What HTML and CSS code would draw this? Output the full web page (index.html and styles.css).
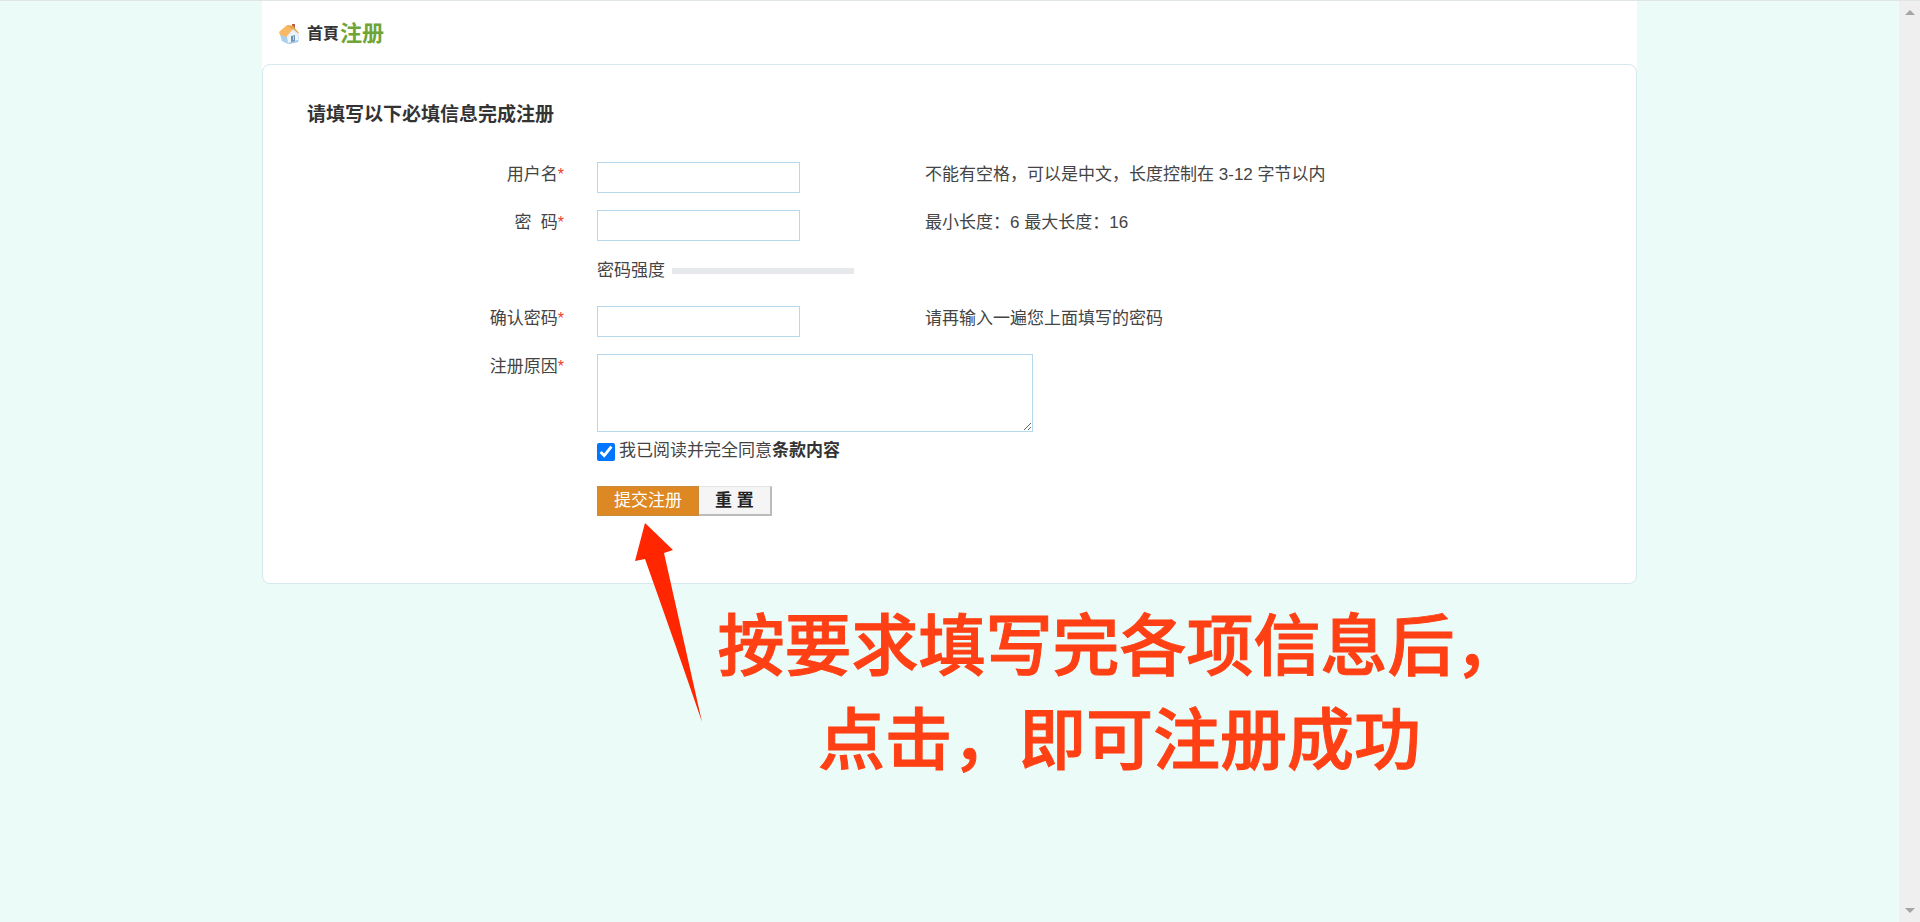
FILE: index.html
```html
<!DOCTYPE html>
<html lang="zh-CN">
<head>
    <meta charset="UTF-8">
    <meta name="viewport" content="width=device-width, initial-scale=1.0">
    <title>注册</title>
    <link rel="stylesheet" href="styles.css">
</head>
<body>
    <div class="page">
        <div class="container">
            <!-- Breadcrumb -->
            <div class="nav">
                <svg class="home-icon" width="22" height="22" viewBox="0 0 22 22" aria-hidden="true">
                    <path d="M1 11 L8 14 L14 7 L20 12 V18 L10 21 L3 18 Z" fill="#d3e7f6"/>
                    <path d="M8 14 L14 6 L19 12 V17 L9 20 Z" fill="#eef5fb"/>
                    <path d="M1 11 L8 14 L9 21 L3 18 Z" fill="#a8d0ee"/>
                    <path d="M9 20 L19 17 V19 L10 21 Z" fill="#9fc6e6"/>
                    <path d="M13 1 H16 V6 L13 5 Z" fill="#b8604a"/>
                    <path d="M0 9 L8 2 L14 3 L15 6 L8 14 L1 12 Z" fill="#f7b963"/>
                    <path d="M8 2 L14 3 L20 10 L18 11 L14 7 Z" fill="#e8a552"/>
                    <path d="M14 6 L21 12 L19 13 L14 8 L9 15 L8 13 Z" fill="#e6eef5"/>
                    <path d="M12 13 L16 12 V18 L12 19 Z" fill="#6f93b3"/>
                    <path d="M14 13 L15 13 V17 L14 17 Z" fill="#b9d4ea"/>
                </svg>
                <a class="nav-home" href="#">首頁</a>
                <span class="nav-current">注册</span>
            </div>

            <!-- Register form -->
            <form class="card">
                <h1 class="card-title">请填写以下必填信息完成注册</h1>

                <div class="row">
                    <label class="label" for="username">用户名<span class="required">*</span></label>
                    <input class="text" type="text" id="username">
                    <p class="hint">不能有空格，可以是中文，长度控制在 3-12 字节以内</p>
                </div>
                <div class="row">
                    <label class="label" for="password">密&nbsp; 码<span class="required">*</span></label>
                    <input class="text" type="password" id="password">
                    <p class="hint">最小长度：6 最大长度：16</p>
                </div>
                <div class="row">
                    <div class="strength">
                        <span>密码强度</span>
                        <div class="strength-bar"></div>
                    </div>
                </div>
                <div class="row">
                    <label class="label" for="confirm">确认密码<span class="required">*</span></label>
                    <input class="text" type="password" id="confirm">
                    <p class="hint">请再输入一遍您上面填写的密码</p>
                </div>
                <div class="row row-reason">
                    <label class="label" for="reason">注册原因<span class="required">*</span></label>
                    <textarea class="reason" id="reason"></textarea>
                </div>
                <div class="row">
                    <div class="agree">
                        <input class="check" type="checkbox" id="agree" checked>
                        <label for="agree">我已阅读并完全同意</label><a class="terms" href="#">条款内容</a>
                    </div>
                </div>
                <div class="row row-buttons">
                    <div class="buttons">
                        <button class="submit" type="submit">提交注册</button>
                        <button class="reset" type="reset">重 置</button>
                        <!-- Arrow pointing at the submit button -->
                        <svg class="arrow" width="70" height="200" viewBox="0 0 70 200" aria-hidden="true">
                            <path d="M10 1 L38 28 L29 31 L67 200 Q43 130 10 37 L0 39 Z" fill="#ff2600"/>
                        </svg>
                    </div>
                </div>
            </form>

            <p class="note">按要求填写完各项信息后，<br>点击，即可注册成功</p>
        </div>
    </div>

    <!-- Scroll bar -->
    <div class="scrollbar">
        <div class="scroll-up"></div>
        <div class="scroll-down"></div>
    </div>
</body>
</html>
```
FILE: styles.css
```css
* {
    box-sizing: border-box;
}
body {
    margin: 0;
    min-height: 100vh;
    display: flex;
    background-color: #ebfbf7;
    border-top: 1px solid #dfe5e3;
    color: #444;
    font-family: "Liberation Sans", "Noto Sans CJK SC", sans-serif;
    font-size: 17px;
    line-height: 26px;
}
p, h1 {
    margin: 0;
}
a {
    color: #333;
    font-weight: bold;
    text-decoration: none;
}
.page {
    flex: 1;
}
.container {
    width: 72.4%;
    margin: 0 auto;
}

/* Breadcrumb */
.nav {
    display: flex;
    align-items: center;
    height: 63px;
    padding: 2px 0 0 17px;
    background-color: white;
}
.home-icon {
    margin-right: 6px;
}
.nav-home {
    font-size: 16px;
}
.nav-current {
    margin-left: 1px;
    color: #6fa436;
    font-size: 22px;
    font-weight: bold;
}

/* Form card */
.card {
    padding: 37px 44px 67px;
    background-color: white;
    border: 1px solid #d5e8ee;
    border-radius: 8px;
    box-shadow: 0 -8px 0 white;
}
.card-title {
    margin-bottom: 34px;
    color: #333;
    font-size: 19px;
    line-height: 26px;
}
.row {
    display: grid;
    grid-template-columns: 257px 361px 1fr;
    min-height: 48px;
    align-items: start;
}
.label {
    text-align: right;
}
.required {
    color: #f04030;
    font-size: 16px;
}
.text, .strength, .reason, .agree, .buttons {
    grid-column: 2;
    margin: 0 0 0 33px;
}
.text, .reason {
    background-color: white;
    border: 1px solid #b4d8ec;
    outline: none;
    font: inherit;
    padding: 0 6px;
}
.text {
    width: 203px;
    height: 31px;
}
.strength, .agree {
    display: flex;
    align-items: center;
    white-space: nowrap;
}
.strength-bar {
    width: 182px;
    height: 6px;
    margin-left: 7px;
    background-color: #e6e8eb;
}
.row-reason {
    min-height: 84px;
}
.reason {
    grid-column: 2 / 4;
    width: 436px;
    height: 78px;
}
.check {
    width: 18px;
    height: 18px;
    margin: 2px 4px 0 0;
    accent-color: #0075ff;
}
.row-buttons {
    min-height: 30px;
}
.buttons {
    position: relative;
    display: flex;
}
.submit, .reset {
    height: 30px;
    padding: 0 16px;
    font: inherit;
    cursor: pointer;
}
.submit {
    background-color: #dd8822;
    border: 1px solid #c98a3c;
    color: white;
}
.reset {
    background-color: #f5f5f5;
    border: solid #bbb;
    border-width: 1px 2px 2px 0;
    border-top-color: #e4e4e4;
    color: #222;
    font-weight: bold;
}
.arrow {
    position: absolute;
    left: 38px;
    top: 36px;
}

/* Big note below the card */
.note {
    margin-top: 10px;
    padding-left: 340px;
    color: #ff4014;
    font-family: "Noto Sans CJK SC", sans-serif;
    font-size: 67px;
    font-weight: 500;
    line-height: 94px;
    text-align: center;
    -webkit-text-stroke: 1px #ff4014;
}

/* Scroll bar */
.scrollbar {
    display: flex;
    flex-direction: column;
    justify-content: space-between;
    align-items: center;
    width: 21px;
    padding: 9px 0;
    background-color: #efefef;
}
.scroll-up, .scroll-down {
    border: 5px solid transparent;
}
.scroll-up {
    border-top-width: 0;
    border-bottom-color: #a5a5a5;
}
.scroll-down {
    border-bottom-width: 0;
    border-top-color: #a5a5a5;
}
```
